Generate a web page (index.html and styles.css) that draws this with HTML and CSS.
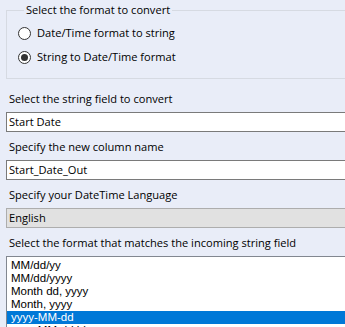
FILE: index.html
```html
<!DOCTYPE html>
<html lang="en">
<head>
  <meta charset="UTF-8">
  <title>DateTime Tool</title>
  <link rel="stylesheet" href="styles.css">
</head>
<body>

  <div class="panel">

    <fieldset class="format-group">
      <legend>Select the format to convert</legend>
      <label class="radio-row">
        <span class="radio"></span>
        Date/Time format to string
      </label>
      <label class="radio-row">
        <span class="radio checked"></span>
        String to Date/Time format
      </label>
    </fieldset>

    <div class="field">
      <div class="field-label">Select the string field to convert</div>
      <div class="text-box">Start Date</div>
    </div>

    <div class="field">
      <div class="field-label">Specify the new column name</div>
      <div class="text-box">Start_Date_Out</div>
    </div>

    <div class="field">
      <div class="field-label">Specify your DateTime Language</div>
      <div class="text-box combo">English</div>
    </div>

    <div class="field">
      <div class="field-label">Select the format that matches the incoming string field</div>
      <ul class="format-list">
        <li>MM/dd/yy</li>
        <li>MM/dd/yyyy</li>
        <li>Month dd, yyyy</li>
        <li>Month, yyyy</li>
        <li class="selected">yyyy-MM-dd</li>
        <li>yyyy-MM-dd hh:mm:ss</li>
      </ul>
    </div>

  </div>

</body>
</html>
```

FILE: styles.css
```css
html, body {
  margin: 0;
  padding: 0;
  height: 100%;
  overflow: hidden;
}
body {
  background-color: #e9edf8;
  font-family: "Open Sans", "Noto Sans", sans-serif;
  font-size: 11.1px;
  color: #000;
}
.panel {
  padding: 3px 0 0 6px;
  width: 360px;
}
.format-group {
  box-sizing: border-box;
  margin: 0;
  padding: 4px 0 0 11px;
  border: 1px solid #d6dae2;
  height: 76px;
}
.format-group legend {
  margin-left: 6px;
  padding: 0 2px;
  line-height: 14px;
}
.radio-row {
  display: flex;
  align-items: center;
  gap: 6px;
  height: 24px;
  line-height: 16px;
}
.radio {
  box-sizing: border-box;
  width: 13px;
  height: 13px;
  border: 1px solid #333;
  border-radius: 50%;
  background: #fff;
  display: flex;
  align-items: center;
  justify-content: center;
}
.radio.checked::after {
  content: "";
  width: 7px;
  height: 7px;
  border-radius: 50%;
  background: #333;
}
.field {
  margin-top: 7px;
}
.format-group + .field {
  margin-top: 12px;
}
.field-label {
  padding-left: 3px;
  line-height: 16px;
  margin-bottom: 5px;
}
.text-box {
  box-sizing: border-box;
  height: 20px;
  line-height: 18px;
  padding-left: 2px;
  background: #fff;
  border: 1px solid #7a7a7a;
}
.text-box.combo {
  background: #e1e1e1;
  border-color: #adadad;
}
.format-list {
  list-style: none;
  margin: 0;
  padding: 2px 0 0 0;
  background: #fff;
  border: 1px solid #828790;
  font-family: "Liberation Sans", Arial, sans-serif;
  font-size: 11.5px;
}
.format-list li {
  line-height: 13px;
  padding-left: 4px;
}
.format-list li.selected {
  background: #0078d7;
  color: #fff;
}
```
